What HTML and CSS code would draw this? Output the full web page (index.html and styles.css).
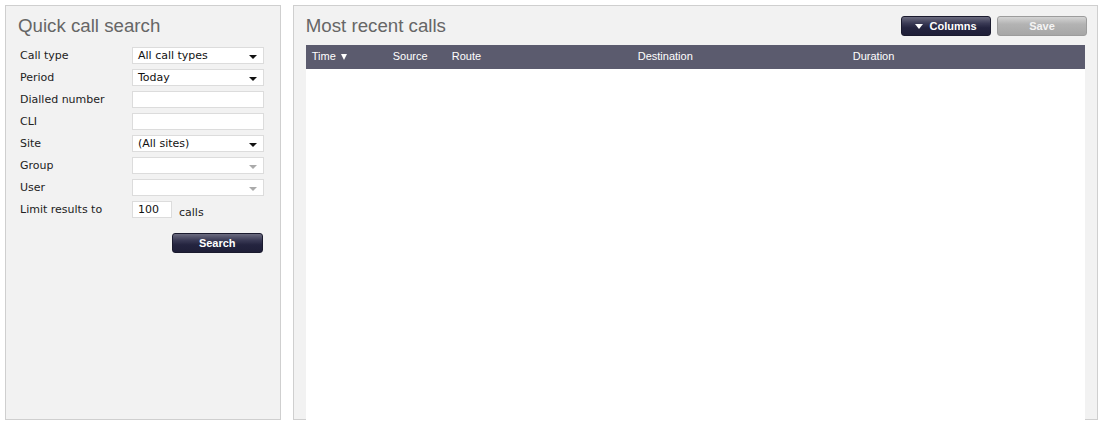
FILE: index.html
```html
<!DOCTYPE html>
<html>
<head>
<meta charset="utf-8">
<link rel="stylesheet" href="styles.css">
</head>
<body>
<div class="page">
  <div class="panel left">
    <h2 class="title">Quick call search</h2>
    <div class="form">
      <div class="row"><span class="label">Call type</span><div class="select"><span>All call types</span><i class="caret"></i></div></div>
      <div class="row"><span class="label">Period</span><div class="select"><span>Today</span><i class="caret"></i></div></div>
      <div class="row"><span class="label">Dialled number</span><div class="input"></div></div>
      <div class="row"><span class="label">CLI</span><div class="input"></div></div>
      <div class="row"><span class="label">Site</span><div class="select"><span>(All sites)</span><i class="caret"></i></div></div>
      <div class="row"><span class="label">Group</span><div class="select disabled"><span></span><i class="caret"></i></div></div>
      <div class="row"><span class="label">User</span><div class="select disabled"><span></span><i class="caret"></i></div></div>
      <div class="row limit"><span class="label">Limit results to</span><div class="input small"><span>100</span></div><span class="unit">calls</span></div>
      <div class="actions"><button class="btn dark search">Search</button></div>
    </div>
  </div>
  <div class="panel right">
    <div class="head">
      <h2 class="title">Most recent calls</h2>
      <div class="buttons">
        <button class="btn dark cols"><i class="wcaret"></i>Columns</button>
        <button class="btn grey save">Save</button>
      </div>
    </div>
    <div class="table">
      <div class="thead">
        <span class="c time">Time <i class="wcaret small"></i></span>
        <span class="c source">Source</span>
        <span class="c route">Route</span>
        <span class="c dest">Destination</span>
        <span class="c dur">Duration</span>
      </div>
      <div class="tbody"></div>
    </div>
  </div>
</div>
</body>
</html>
```
FILE: styles.css
```css
* { box-sizing: border-box; }
html, body { margin: 0; padding: 0; background: #fff; }
body { font-family: "DejaVu Sans", Verdana, sans-serif; }
.page {
  display: flex;
  gap: 12px;
  padding: 5px 8px 8px 5px;
  height: 427px;
}
.panel {
  background: #f2f2f2;
  border: 1px solid #cfcfcf;
  height: 415px;
}
.left { width: 276px; padding: 0 0 0 12px; }
.right { width: 806px; padding: 0 12px 0 12px; display: flex; flex-direction: column; }
.title {
  margin: 0;
  font-family: "Liberation Sans", Arial, sans-serif;
  font-weight: normal;
  font-size: 18.7px;
  color: #666;
  line-height: 22px;
}
.left .title { padding-top: 9px; height: 41px; }
.form { display: flex; flex-direction: column; gap: 5px; padding-left: 2px; }
.row { display: flex; align-items: flex-start; height: 17px; }
.label {
  width: 112px;
  font-size: 11px;
  color: #222;
  line-height: 16px;
  padding-top: 1px;
}
.select, .input {
  width: 132px;
  height: 17px;
  background: #fff;
  border: 1px solid #dcdcdc;
  display: flex;
  align-items: center;
  padding: 0 6px 0 5px;
  font-size: 11px;
  color: #111;
  line-height: 14px;
}
.select span { flex: 1; }
.caret {
  width: 0; height: 0;
  border-left: 4px solid transparent;
  border-right: 4px solid transparent;
  border-top: 4px solid #111;
  margin-top: 3px;
}
.disabled .caret { border-top-color: #aaa; }
.input.small { width: 40px; padding-left: 5px; }
.unit { font-size: 11px; color: #222; margin-left: 7px; margin-top: 5px; line-height: 14px; }
.actions { display: flex; justify-content: flex-end; padding-right: 17px; margin-top: 10px; }
.btn {
  height: 20px;
  border-radius: 3px;
  font-family: "Liberation Sans", Arial, sans-serif;
  font-weight: bold;
  font-size: 11px;
  color: #fff;
  padding: 0;
  display: inline-flex;
  align-items: center;
  justify-content: center;
  gap: 6px;
}
.btn.dark {
  background: linear-gradient(#6c6c80 0%, #3a3a55 35%, #24243f 60%, #1f1f38 100%);
  border: 1px solid #1a1a2e;
}
.btn.grey {
  background: linear-gradient(#d4d4d4 0%, #b3b3b3 40%, #a6a6a6 100%);
  border: 1px solid #9c9c9c;
  color: #f4f4f4;
}
.search { width: 91px; }
.head { display: flex; justify-content: space-between; align-items: flex-start; height: 39px; }
.right .title { padding-top: 9px; }
.buttons { display: flex; gap: 6px; padding-top: 10px; margin-right: -2px; }
.cols, .save { width: 90px; }
.wcaret {
  display: inline-block;
  width: 0; height: 0;
  border-left: 4px solid transparent;
  border-right: 4px solid transparent;
  border-top: 5px solid #fff;
}
.wcaret.small { border-left-width: 3.5px; border-right-width: 3.5px; border-top-width: 6px; margin-left: 2px; vertical-align: 0; }
.table { flex: 1; display: flex; flex-direction: column; margin-bottom: -1px; }
.thead {
  height: 24px;
  background: #5b5b6e;
  display: flex;
  align-items: center;
  font-family: "Liberation Sans", Arial, sans-serif;
  font-size: 11px;
  color: #fff;
  padding-left: 6px;
  padding-bottom: 2px;
}
.c { display: block; }
.time { width: 81px; }
.source { width: 59px; }
.route { width: 186px; }
.dest { width: 215px; }
.tbody { flex: 1; background: #fff; }
```
